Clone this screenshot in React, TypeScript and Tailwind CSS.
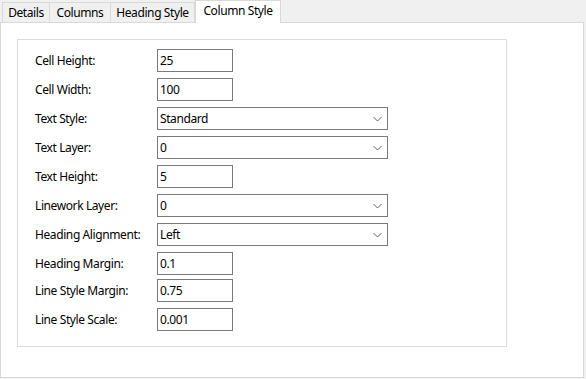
import React from "react";

const font = { fontFamily: '"Noto Sans", "Open Sans", sans-serif' };

function TextBox({ value }: { value: string }) {
  return (
    <div className="w-[76px] h-[23px] border border-[#7a7a7a] bg-white flex items-center pl-[2px] text-[12px] text-black">
      {value}
    </div>
  );
}

function Combo({ value }: { value: string }) {
  return (
    <div className="w-[231px] h-[23px] border border-[#7a7a7a] bg-white flex items-center justify-between pl-[2px] pr-[5px] text-[12px] text-black">
      <span>{value}</span>
      <svg width="9" height="6" viewBox="0 0 9 6">
        <path d="M0.5 1 L4.5 5 L8.5 1" fill="none" stroke="#606060" strokeWidth="1" />
      </svg>
    </div>
  );
}

const rows: { label: string; value: string; combo?: boolean; mt: string }[] = [
  { label: "Cell Height:", value: "25", mt: "mt-0" },
  { label: "Cell Width:", value: "100", mt: "mt-[6px]" },
  { label: "Text Style:", value: "Standard", combo: true, mt: "mt-[6px]" },
  { label: "Text Layer:", value: "0", combo: true, mt: "mt-[6px]" },
  { label: "Text Height:", value: "5", mt: "mt-[6px]" },
  { label: "Linework Layer:", value: "0", combo: true, mt: "mt-[6px]" },
  { label: "Heading Alignment:", value: "Left", combo: true, mt: "mt-[6px]" },
  { label: "Heading Margin:", value: "0.1", mt: "mt-[6px]" },
  { label: "Line Style Margin:", value: "0.75", mt: "mt-[4px]" },
  { label: "Line Style Scale:", value: "0.001", mt: "mt-[6px]" },
];

export default function App() {
  return (
    <div className="w-[586px] h-[379px] bg-[#f0f0f0] text-[12px] text-black tracking-[-0.4px]" style={font}>
      <div className="flex items-end h-[22px] pl-[2px]">
        <div className="w-[48px] h-[20px] border border-b-0 border-[#d9d9d9] bg-[#f0f0f0] flex items-center justify-center">Details</div>
        <div className="w-[61px] h-[20px] border border-b-0 border-l-0 border-[#d9d9d9] bg-[#f0f0f0] flex items-center justify-center">Columns</div>
        <div className="w-[84px] h-[20px] border border-b-0 border-l-0 border-[#d9d9d9] bg-[#f0f0f0] flex items-center justify-center">Heading Style</div>
        <div className="w-[86px] h-[23px] mb-[-1px] border border-b-0 border-[#d9d9d9] bg-white flex items-center justify-center relative z-10 pb-[2px]">Column Style</div>
      </div>
      <div className="w-[584px] h-[356px] border border-[#d9d9d9] bg-white pt-[16px] pl-[16px]">
        <div className="w-[490px] h-[308px] border border-[#dcdcdc] pt-[9px] pl-[17px] flex flex-col">
          {rows.map((r) => (
            <div key={r.label} className={"flex items-center h-[23px] " + r.mt}>
              <div className="w-[122px]">{r.label}</div>
              {r.combo ? <Combo value={r.value} /> : <TextBox value={r.value} />}
            </div>
          ))}
        </div>
      </div>
    </div>
  );
}
